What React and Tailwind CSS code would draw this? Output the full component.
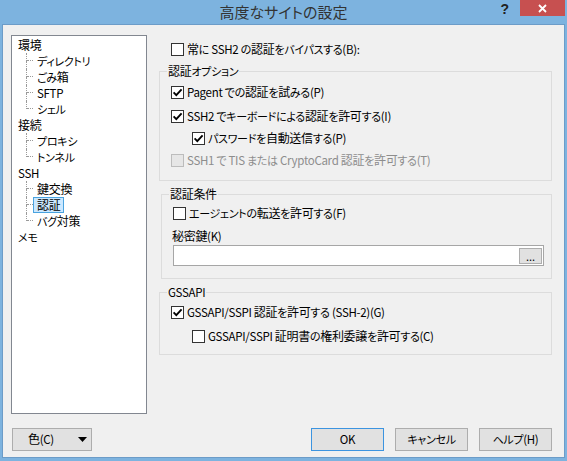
import React from "react";

const FONT = "font-['Noto_Sans_CJK_JP','Noto_Sans',sans-serif] [font-feature-settings:'palt']";

const KANA = /^[\u3000-\u30ff\uff00-\uffef]+$/;
const KANJI = /^[\u4e00-\u9fff]+$/;

function T({ s }) {
  const parts = s.split(/([\u3000-\u30ff\uff00-\uffef]+|[\u4e00-\u9fff]+)/);
  return (
    <>
      {parts.map((p, i) =>
        p === "" ? null : KANA.test(p) ? (
          <span key={i} className="text-[11px]">{p}</span>
        ) : KANJI.test(p) ? (
          <span key={i} className="text-[12px]">{p}</span>
        ) : (
          <span key={i}>{p}</span>
        )
      )}
    </>
  );
}

function Box({ checked, disabled }) {
  return (
    <span
      className={
        "w-[13px] h-[13px] border flex items-center justify-center shrink-0 " +
        (disabled ? "border-[#bcbcbc] bg-[#e6e6e6]" : "border-[#333333] bg-white")
      }
    >
      {checked && (
        <svg width="11" height="11" viewBox="0 0 11 11">
          <path d="M1.6 5.4 L4.3 8.1 L9.6 2.4" fill="none" stroke="#000" strokeWidth="1.9" />
        </svg>
      )}
    </span>
  );
}

function Check({ label, checked, disabled, indent }) {
  return (
    <div className={"flex items-center h-[22px] gap-[3px] " + (indent ? "pl-[21px]" : "")}>
      <Box checked={checked} disabled={disabled} />
      <span className={"whitespace-nowrap " + (disabled ? "text-[#8d8d8d]" : "text-black")}>
        <T s={label} />
      </span>
    </div>
  );
}

function Group({ title, className, children }) {
  return (
    <fieldset className={"border border-[#dcdcdc] " + className}>
      <legend className="ml-[7px] px-[1px] leading-[14px]">
        <T s={title} />
      </legend>
      {children}
    </fieldset>
  );
}

function TreeRoot({ label }) {
  return (
    <div className="h-[16px] flex items-center leading-[16px]">
      <span><T s={label} /></span>
    </div>
  );
}

function TreeChild({ label, last, selected }) {
  return (
    <div className="h-[16px] flex items-stretch leading-[16px]">
      <div className="w-[15px] flex shrink-0">
        <div className="w-[8px]" />
        <div className="flex flex-col w-[7px]">
          <div className="h-[8px] flex">
            <div className="border-l border-dotted border-[#9a9a9a]" />
            <div className="flex-1 flex flex-col justify-end">
              <div className="border-b border-dotted border-[#9a9a9a]" />
            </div>
          </div>
          <div className="h-[8px] flex">
            {!last && <div className="border-l border-dotted border-[#9a9a9a]" />}
          </div>
        </div>
      </div>
      <span
        className={
          "border px-[3px] flex items-center " +
          (selected ? "border-[#4aa3df] bg-[#cce8ff]" : "border-transparent")
        }
      >
        <T s={label} />
      </span>
    </div>
  );
}

function Btn({ children, primary, className }) {
  return (
    <div
      className={
        "h-[23px] flex items-center justify-center bg-[#e1e1e1] border " +
        (primary ? "border-[#3c94e0] " : "border-[#adadad] ") +
        (className || "")
      }
    >
      {children}
    </div>
  );
}

export default function App() {
  return (
    <div className={"w-[567px] h-[461px] bg-[#7db3df] flex flex-col text-[11.5px] text-black tracking-[-0.3px] " + FONT}>
      {/* Title bar */}
      <div className="h-[24px] grid grid-cols-[1fr_auto_1fr] tracking-normal">
        <div />
        <div className="flex items-center text-[15px] text-[#333333] pt-[1px]">高度なサイトの設定</div>
        <div className="flex justify-end items-start">
          <span className="text-[14px] font-bold leading-[17px] text-[#222] font-['Liberation_Sans',sans-serif] mt-[1px] mr-[11px]">?</span>
          <div className="w-[45px] h-[16px] bg-[#c75050] flex items-center justify-center mr-[2px]">
            <svg width="9" height="9" viewBox="0 0 9 9">
              <path d="M1 1 L8 8 M8 1 L1 8" stroke="#fff" strokeWidth="1.8" />
            </svg>
          </div>
        </div>
      </div>

      {/* Client */}
      <div className="mx-[2px] h-[434px] border border-[#6c9cc8] bg-[#f0f0f0] flex flex-col">
        <div className="flex pt-[10px]">
          {/* Tree */}
          <div className="ml-[8px] w-[136px] h-[379px] border border-[#828790] bg-white pl-[6px] pt-[1px]">
            <TreeRoot label="環境" />
            <TreeChild label="ディレクトリ" />
            <TreeChild label="ごみ箱" />
            <TreeChild label="SFTP" />
            <TreeChild label="シェル" last />
            <TreeRoot label="接続" />
            <TreeChild label="プロキシ" />
            <TreeChild label="トンネル" last />
            <TreeRoot label="SSH" />
            <TreeChild label="鍵交換" />
            <TreeChild label="認証" selected />
            <TreeChild label="バグ対策" last />
            <TreeRoot label="メモ" />
          </div>

          {/* Right panel */}
          <div className="ml-[12px] pt-[3px] flex flex-col">
            <div className="pl-[12px]">
              <Check label="常に SSH2 の認証をバイパスする(B):" />
            </div>

            <Group title="認証オプション" className="mt-[4px] w-[393px]">
              <div className="pl-[11px] pt-[3px] pb-[9px] flex flex-col">
                <Check label="Pagent での認証を試みる(P)" checked />
                <div className="mt-[2px]">
                  <Check label="SSH2 でキーボードによる認証を許可する(I)" checked />
                </div>
                <Check label="パスワードを自動送信する(P)" checked indent />
                <Check label="SSH1 で TIS または CryptoCard 認証を許可する(T)" disabled />
              </div>
            </Group>

            <Group title="認証条件" className="mt-[6px] ml-[2px] w-[391px]">
              <div className="pl-[11px] pt-[1px] pb-[12px] flex flex-col">
                <Check label="エージェントの転送を許可する(F)" />
                <div className="h-[16px] mt-[4px] flex items-center -ml-[1px]">
                  <span><T s="秘密鍵(K)" /></span>
                </div>
                <div className="mt-[1px] w-[371px] h-[21px] bg-white border border-[#a6a6a6] flex items-center justify-end pr-[1px]">
                  <div className="w-[23px] h-[16px] bg-[#e1e1e1] border border-[#adadad] flex items-end justify-center text-[11px] leading-[12px] pb-[1px] tracking-normal">
                    ...
                  </div>
                </div>
              </div>
            </Group>

            <Group title="GSSAPI" className="mt-[6px] w-[393px]">
              <div className="pl-[11px] pt-[2px] pb-[7px] flex flex-col">
                <Check label="GSSAPI/SSPI 認証を許可する (SSH-2)(G)" checked />
                <div className="mt-[2px]">
                  <Check label="GSSAPI/SSPI 証明書の権利委譲を許可する(C)" indent />
                </div>
              </div>
            </Group>
          </div>
        </div>

        {/* Bottom buttons */}
        <div className="mt-[14px] flex items-center">
          <Btn className="ml-[9px] w-[80px]">
            <div className="w-full flex items-center">
              <span className="w-[56px] text-center"><T s="色(C)" /></span>
              <svg width="9" height="5" viewBox="0 0 9 5" className="ml-[9px]">
                <path d="M0 0 L9 0 L4.5 5 Z" fill="#000" />
              </svg>
            </div>
          </Btn>
          <div className="flex-1" />
          <div className="flex gap-[11px] mr-[12px]">
            <Btn primary className="w-[73px]">OK</Btn>
            <Btn className="w-[73px]"><T s="キャンセル" /></Btn>
            <Btn className="w-[73px]"><T s="ヘルプ(H)" /></Btn>
          </div>
        </div>
      </div>
    </div>
  );
}
